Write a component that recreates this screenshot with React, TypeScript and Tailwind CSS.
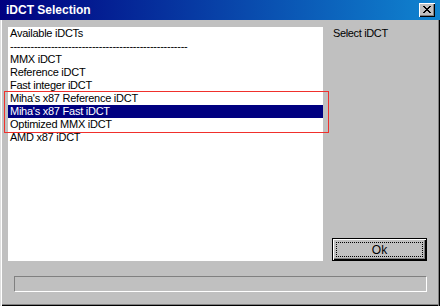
import React from "react";

const items = [
  "Available iDCTs",
  "----------------------------------------------------",
  "MMX iDCT",
  "Reference iDCT",
  "Fast integer iDCT",
  "Miha's x87 Reference iDCT",
  "Miha's x87 Fast iDCT",
  "Optimized MMX iDCT",
  "AMD x87 iDCT",
];

function CloseGlyph() {
  const rows = [
    "XX....XX",
    ".XX..XX.",
    "..XXXX..",
    "...XX...",
    "..XXXX..",
    ".XX..XX.",
    "XX....XX",
  ];
  const rects: React.ReactElement[] = [];
  rows.forEach((r, y) =>
    r.split("").forEach((c, x) => {
      if (c === "X") rects.push(<rect key={`${x}-${y}`} x={x} y={y} width={1} height={1} fill="#000" />);
    })
  );
  return (
    <svg width="8" height="7" viewBox="0 0 8 7" shapeRendering="crispEdges">
      {rects}
    </svg>
  );
}

export default function App() {
  return (
    <div
      className="relative w-[440px] h-[306px] bg-[#c0c0c0] flex flex-col overflow-hidden"
      style={{ fontFamily: '"Liberation Sans", Arial, sans-serif' }}
    >
      {/* Title bar */}
      <div className="h-[20px] w-full flex items-center justify-between bg-[linear-gradient(to_right,#000080,#1084d0)] pl-[6px] pr-[5px]">
        <span className="text-white font-bold text-[12px] leading-none">iDCT Selection</span>
        <div className="w-[16px] h-[14px] bg-[#c0c0c0] flex items-start justify-start pl-[4px] pt-[3px] shadow-[inset_1px_1px_#fff,inset_-1px_-1px_#000,inset_-2px_-2px_#808080]">
          <CloseGlyph />
        </div>
      </div>

      {/* Body */}
      <div className="flex-1 flex flex-col pt-[7px] pl-[8px] shadow-[inset_1px_0_#dfdfdf,inset_2px_0_#fff,inset_-1px_0_#000,inset_-2px_0_#808080,inset_0_-1px_#000,inset_0_-2px_#808080]">
        <div className="flex gap-[9px]">
          <div className="w-[315px] h-[234px] bg-white text-[11px] tracking-[-0.25px] text-black">
            {items.map((t, i) => (
              <div
                key={i}
                className={
                  "h-[13px] leading-[13px] pl-[2px] whitespace-nowrap overflow-hidden " +
                  (i === 6 ? "bg-[#000080] text-white" : "")
                }
              >
                {t}
              </div>
            ))}
          </div>
          <div className="w-[95px] h-[234px] flex flex-col justify-between">
            <div className="h-[13px] leading-[13px] pl-[1px] text-[11px] tracking-[-0.35px] text-black">Select iDCT</div>
            <div className="relative w-[95px] h-[23px] border border-black bg-[#c0c0c0] flex items-center justify-center shadow-[inset_1px_1px_#fff,inset_-1px_-1px_#000,inset_-2px_-2px_#808080]">
              <div className="absolute inset-[3px] border border-dotted border-black" />
              <span className="text-[12px] text-black leading-none">Ok</span>
            </div>
          </div>
        </div>
        <div className="mt-[15px] ml-[6px] w-[413px] h-[16px] border-t border-l border-[#808080] border-b-white border-r-white border-b border-r" />
      </div>

      {/* Red annotation rectangle */}
      <div className="absolute left-[4px] top-[91px] w-[325px] h-[42px] border-[1.5px] border-[#f0302c] pointer-events-none" />
    </div>
  );
}
